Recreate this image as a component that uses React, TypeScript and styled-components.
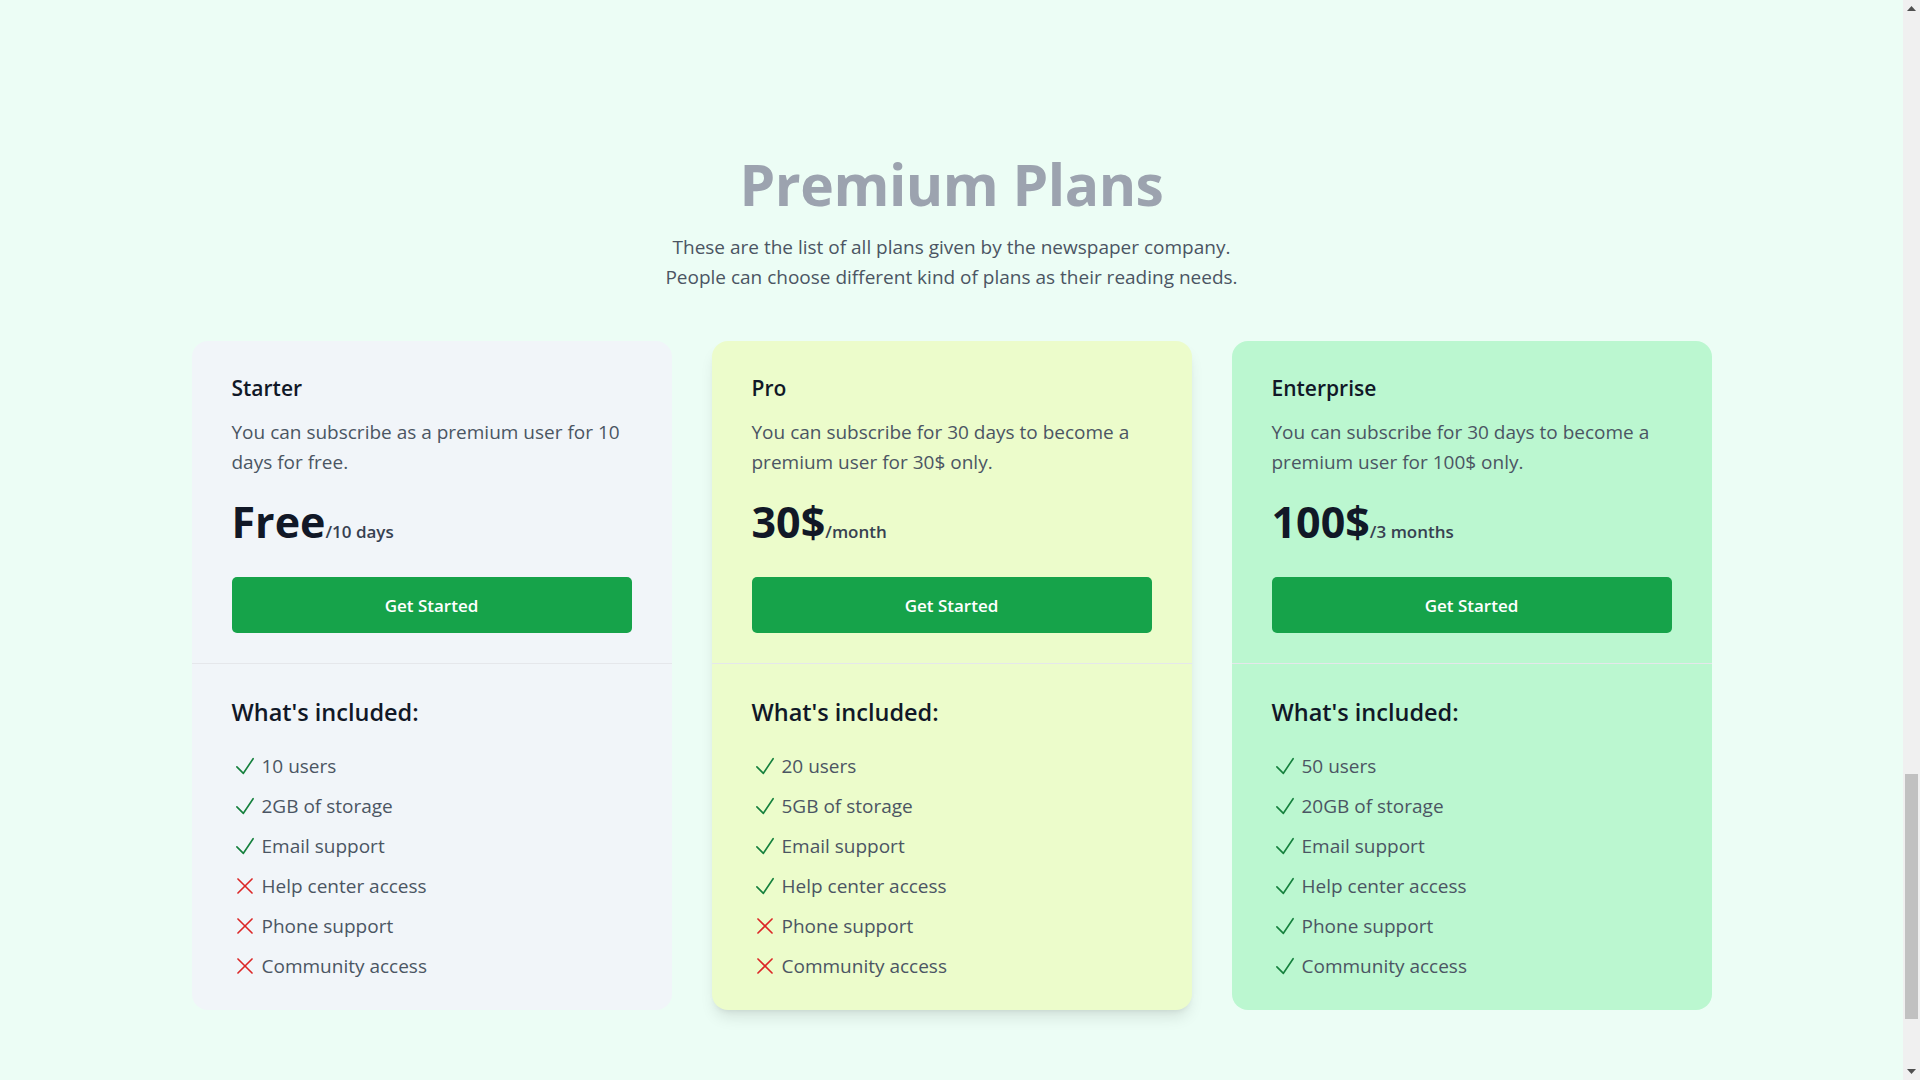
import React from "react";
import styled, { createGlobalStyle } from "styled-components";

const GlobalStyle = createGlobalStyle`
  body {
    margin: 0;
    background: #ecfdf5;
    font-family: "Open Sans", "Noto Sans", sans-serif;
    -webkit-font-smoothing: antialiased;
  }
  * { box-sizing: border-box; }
`;

const Page = styled.div`
  display: flex;
  height: 1080px;
  overflow: hidden;
`;

const Main = styled.main`
  flex: 1;
  min-width: 0;
  padding-top: 154px;
`;

/* browser scrollbar as seen in the screenshot */
const ScrollBar = styled.div`
  flex: none;
  width: 17px;
  background: #f0f0f0;
  display: flex;
  flex-direction: column;
`;

const ScrollArrow = styled.div`
  flex: none;
  height: 17px;
  display: flex;
  align-items: center;
  justify-content: center;
  color: #505050;
`;

const ScrollTrack = styled.div`
  flex: 1;
  display: flex;
  flex-direction: column;
  padding: 0 2px;
`;

const ScrollGap = styled.div<{ $grow: number }>`
  flex: ${(p) => p.$grow} 1 0;
`;

const ScrollThumb = styled.div`
  flex: 245 1 0;
  background: #c1c1c1;
`;

const Header = styled.header`
  display: flex;
  flex-direction: column;
  align-items: center;
  text-align: center;
`;

const Title = styled.h1`
  margin: 0;
  font-size: 57px;
  line-height: 60px;
  letter-spacing: -0.5px;
  font-weight: 700;
  color: #9ca3af;
`;

const Subtitle = styled.p`
  margin: 18px 0 0;
  font-size: 19px;
  line-height: 30px;
  color: #4b5563;
`;

const Grid = styled.section`
  width: 1520px;
  margin: 49px auto 0;
  display: grid;
  grid-template-columns: repeat(3, 480px);
  gap: 40px;
`;

const Card = styled.article<{ $bg: string; $raised?: boolean }>`
  background: ${(p) => p.$bg};
  border-radius: 16px;
  box-shadow: ${(p) =>
    p.$raised
      ? "0 10px 15px -3px rgba(0,0,0,0.1), 0 4px 6px -4px rgba(0,0,0,0.1)"
      : "none"};
  overflow: hidden;
`;

const CardTop = styled.div`
  padding: 31px 40px 30px;
  border-bottom: 1px solid #e5e7eb;
`;

const PlanName = styled.h3`
  margin: 0;
  font-size: 21px;
  line-height: 32px;
  font-weight: 600;
  color: #111827;
`;

const Description = styled.p`
  margin: 13px 0 0;
  font-size: 19px;
  line-height: 30px;
  color: #4b5563;
`;

const PriceRow = styled.p`
  margin: 23px 0 0;
  display: flex;
  align-items: baseline;
`;

const Amount = styled.span`
  font-size: 43px;
  line-height: 44px;
  font-weight: 700;
  color: #111827;
`;

const Period = styled.span`
  font-size: 17px;
  line-height: 24px;
  font-weight: 600;
  color: #374151;
`;

const Button = styled.button`
  display: block;
  width: 100%;
  height: 56px;
  margin-top: 33px;
  border: none;
  border-radius: 5px;
  background: #16a34a;
  color: #ffffff;
  font-family: inherit;
  font-size: 17px;
  font-weight: 600;
  cursor: pointer;
`;

const CardBottom = styled.div`
  padding: 32px 40px 30px;
`;

const IncludedTitle = styled.h3`
  margin: 0;
  font-size: 23.5px;
  line-height: 32px;
  font-weight: 600;
  color: #111827;
`;

const FeatureList = styled.ul`
  margin: 24px 0 0;
  padding: 0;
  list-style: none;
  display: flex;
  flex-direction: column;
  gap: 12px;
`;

const Feature = styled.li`
  display: flex;
  align-items: center;
  gap: 4px;
  height: 28px;
  font-size: 19px;
  line-height: 28px;
  color: #4b5563;
`;

const IconBox = styled.svg<{ $ok: boolean }>`
  flex: none;
  width: 26px;
  height: 26px;
  color: ${(p) => (p.$ok ? "#15803d" : "#dc2626")};
`;

const FeatureIcon = ({ ok }: { ok: boolean }) => (
  <IconBox
    $ok={ok}
    viewBox="0 0 24 24"
    fill="none"
    stroke="currentColor"
    strokeWidth={1.5}
    strokeLinecap="round"
    strokeLinejoin="round"
  >
    {ok ? <path d="M4.5 12.75l6 6 9-13.5" /> : <path d="M5.5 18.5L18.5 5.5M5.5 5.5l13 13" />}
  </IconBox>
);

type Plan = {
  name: string;
  desc: string;
  amount: string;
  period: string;
  bg: string;
  raised?: boolean;
  features: [string, boolean][];
};

const plans: Plan[] = [
  {
    name: "Starter",
    desc: "You can subscribe as a premium user for 10 days for free.",
    amount: "Free",
    period: "/10 days",
    bg: "#f1f5f9",
    features: [
      ["10 users", true],
      ["2GB of storage", true],
      ["Email support", true],
      ["Help center access", false],
      ["Phone support", false],
      ["Community access", false],
    ],
  },
  {
    name: "Pro",
    desc: "You can subscribe for 30 days to become a premium user for 30$ only.",
    amount: "30$",
    period: "/month",
    bg: "#ecfccb",
    raised: true,
    features: [
      ["20 users", true],
      ["5GB of storage", true],
      ["Email support", true],
      ["Help center access", true],
      ["Phone support", false],
      ["Community access", false],
    ],
  },
  {
    name: "Enterprise",
    desc: "You can subscribe for 30 days to become a premium user for 100$ only.",
    amount: "100$",
    period: "/3 months",
    bg: "#bbf7d0",
    features: [
      ["50 users", true],
      ["20GB of storage", true],
      ["Email support", true],
      ["Help center access", true],
      ["Phone support", true],
      ["Community access", true],
    ],
  },
];

export default function App() {
  return (
    <>
      <GlobalStyle />
      <Page>
        <Main>
          <Header>
            <Title>Premium Plans</Title>
            <Subtitle>
              These are the list of all plans given by the newspaper company.
              <br />
              People can choose different kind of plans as their reading needs.
            </Subtitle>
          </Header>
          <Grid>
            {plans.map((plan) => (
              <Card key={plan.name} $bg={plan.bg} $raised={plan.raised}>
                <CardTop>
                  <PlanName>{plan.name}</PlanName>
                  <Description>{plan.desc}</Description>
                  <PriceRow>
                    <Amount>{plan.amount}</Amount>
                    <Period>{plan.period}</Period>
                  </PriceRow>
                  <Button>Get Started</Button>
                </CardTop>
                <CardBottom>
                  <IncludedTitle>What's included:</IncludedTitle>
                  <FeatureList>
                    {plan.features.map(([label, ok]) => (
                      <Feature key={label}>
                        <FeatureIcon ok={ok} />
                        {label}
                      </Feature>
                    ))}
                  </FeatureList>
                </CardBottom>
              </Card>
            ))}
          </Grid>
        </Main>
        <ScrollBar aria-hidden="true">
          <ScrollArrow>
            <svg width="9" height="5" viewBox="0 0 9 5">
              <path d="M4.5 0L9 5H0z" fill="currentColor" />
            </svg>
          </ScrollArrow>
          <ScrollTrack>
            <ScrollGap $grow={757} />
            <ScrollThumb />
            <ScrollGap $grow={44} />
          </ScrollTrack>
          <ScrollArrow>
            <svg width="9" height="5" viewBox="0 0 9 5">
              <path d="M0 0H9L4.5 5z" fill="currentColor" />
            </svg>
          </ScrollArrow>
        </ScrollBar>
      </Page>
    </>
  );
}
